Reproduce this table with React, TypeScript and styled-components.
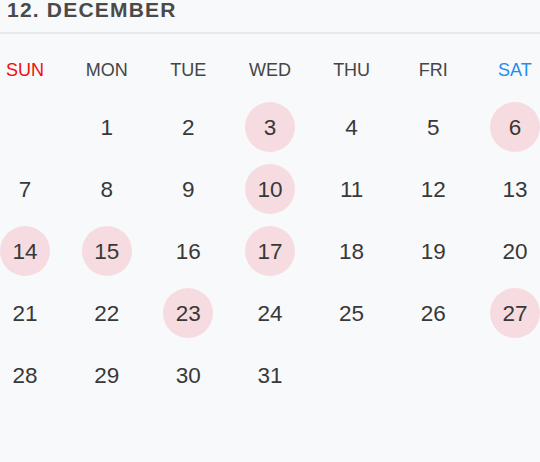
import React from 'react';
import styled, { createGlobalStyle } from 'styled-components';

const GlobalStyle = createGlobalStyle`
    html, body {
        margin: 0;
        background: #f8f9fb;
    }
    body {
        font-family: 'Liberation Sans', Arial, sans-serif;
    }
`;

const Kalender = styled.div`
    width: 540px;
    height: 462px;
    background: #f8f9fb;
`;

const Tittel = styled.h2`
    margin: 0;
    padding: 0 7px;
    height: 34px;
    line-height: 20px;
    font-size: 21px;
    font-weight: bold;
    letter-spacing: 1.2px;
    color: #4a4a4a;
    border-bottom: 2px solid #e7e9ec;
    box-sizing: border-box;
`;

const Rutenett = styled.div`
    display: grid;
    grid-template-columns: repeat(7, 50px);
    justify-content: space-between;
`;

const Ukedager = styled(Rutenett)`
    height: 68px;
    padding-top: 4px;
    box-sizing: border-box;
    align-items: center;
`;

const Ukedag = styled.div<{ farge: string }>`
    text-align: center;
    white-space: nowrap;
    font-size: 18px;
    color: ${(p) => p.farge};
`;

const Datoer = styled(Rutenett)`
    grid-auto-rows: 50px;
    row-gap: 12px;
`;

const Dato = styled.div<{ markert: boolean }>`
    display: flex;
    align-items: center;
    justify-content: center;
    padding-top: 2px;
    box-sizing: border-box;
    border-radius: 50%;
    font-size: 22.5px;
    color: #383838;
    background: ${(p) => (p.markert ? '#f6dce0' : 'transparent')};
`;

const ukedager = ['SUN', 'MON', 'TUE', 'WED', 'THU', 'FRI', 'SAT'];
const markerte = [3, 6, 10, 14, 15, 17, 23, 27];

const ukedagFarge = (i: number) => (i === 0 ? '#f00d0d' : i === 6 ? '#1e8ef0' : '#454545');

const App = () => {
    const dager = Array.from({ length: 31 }, (_, i) => i + 1);
    return (
        <Kalender>
            <GlobalStyle />
            <Tittel>12. DECEMBER</Tittel>
            <Ukedager>
                {ukedager.map((dag, i) => (
                    <Ukedag key={dag} farge={ukedagFarge(i)}>
                        {dag}
                    </Ukedag>
                ))}
            </Ukedager>
            <Datoer>
                <div />
                {dager.map((dag) => (
                    <Dato key={dag} markert={markerte.includes(dag)}>
                        {dag}
                    </Dato>
                ))}
            </Datoer>
        </Kalender>
    );
};

export default App;
